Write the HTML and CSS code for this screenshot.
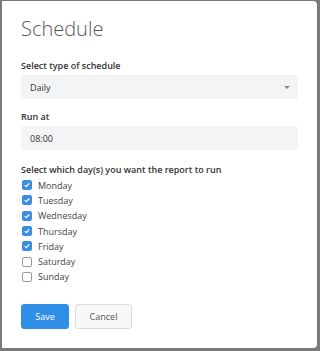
FILE: index.html
```html
<!DOCTYPE html>
<html>
<head>
<meta charset="utf-8">
<link rel="stylesheet" href="styles.css">
</head>
<body>
<div class="dialog">
  <h1 class="title">Schedule</h1>
  <div class="field">
    <label class="label">Select type of schedule</label>
    <div class="select"><span>Daily</span><span class="caret"></span></div>
  </div>
  <div class="field">
    <label class="label">Run at</label>
    <div class="input">08:00</div>
  </div>
  <div class="field days">
    <label class="label">Select which day(s) you want the report to run</label>
    <ul class="checks">
      <li><span class="box on"><svg viewBox="0 0 10 10"><path d="M2.2 5.2 L4.2 7.1 L7.9 3" /></svg></span>Monday</li>
      <li><span class="box on"><svg viewBox="0 0 10 10"><path d="M2.2 5.2 L4.2 7.1 L7.9 3" /></svg></span>Tuesday</li>
      <li><span class="box on"><svg viewBox="0 0 10 10"><path d="M2.2 5.2 L4.2 7.1 L7.9 3" /></svg></span>Wednesday</li>
      <li><span class="box on"><svg viewBox="0 0 10 10"><path d="M2.2 5.2 L4.2 7.1 L7.9 3" /></svg></span>Thursday</li>
      <li><span class="box on"><svg viewBox="0 0 10 10"><path d="M2.2 5.2 L4.2 7.1 L7.9 3" /></svg></span>Friday</li>
      <li><span class="box"></span>Saturday</li>
      <li><span class="box"></span>Sunday</li>
    </ul>
  </div>
  <div class="actions">
    <button class="btn primary">Save</button>
    <button class="btn cancel">Cancel</button>
  </div>
</div>
</body>
</html>
```
FILE: styles.css
```css
html, body {
  margin: 0;
  padding: 0;
  background: #7a7a7a;
  width: 320px;
  height: 351px;
  overflow: hidden;
}
body {
  padding: 1px 3px 3px 2px;
  box-sizing: border-box;
  font-family: "Open Sans", "Liberation Sans", sans-serif;
  color: #333;
}
.dialog {
  background: #fff;
  height: 347px;
  box-sizing: border-box;
  border-radius: 0 4px 4px 0;
  padding: 13.5px 19px 0 19px;
}
.title {
  margin: 0 0 17.5px 0;
  font-size: 20px;
  font-weight: 300;
  color: #585858;
  line-height: 27px;
}
.field {
  margin-bottom: 11px;
}
.field + .field {
  margin-bottom: 13px;
}
.days {
  margin-bottom: 0 !important;
}
.label {
  display: block;
  font-size: 9px;
  font-weight: 600;
  line-height: 13px;
  margin-bottom: 3px;
  color: #333;
}
.select, .input {
  background: #f3f4f5;
  border-radius: 3px;
  height: 24px;
  display: flex;
  align-items: center;
  padding: 0 8px 0 9px;
  font-size: 9px;
  color: #333;
}
.select {
  justify-content: space-between;
}
.caret {
  width: 0;
  height: 0;
  border-left: 3.5px solid transparent;
  border-right: 3.5px solid transparent;
  border-top: 3.5px solid #888;
}
.days .label {
  margin-bottom: 1.5px;
}
.checks {
  list-style: none;
  margin: 0;
  padding: 0;
}
.checks li {
  display: flex;
  align-items: center;
  height: 15.3px;
  font-size: 9px;
  color: #444;
}
.box {
  width: 10px;
  height: 10px;
  box-sizing: border-box;
  border: 1px solid #9a9a9a;
  border-radius: 2px;
  margin: 0 6px 0 1px;
  background: #fff;
  display: flex;
}
.box.on {
  background: #3b8fe0;
  border-color: #3b8fe0;
}
.box svg {
  width: 8px;
  height: 8px;
  fill: none;
  stroke: #fff;
  stroke-width: 1.6;
}
.actions {
  display: flex;
  gap: 6px;
  margin-top: 19.5px;
}
.btn {
  font-family: "Open Sans", "Liberation Sans", sans-serif;
  font-size: 9px;
  height: 25px;
  border-radius: 3px;
  border: 1px solid #dcdcdc;
  background: #f8f8f8;
  color: #555;
  padding: 0;
}
.btn.primary {
  background: #2f8fe6;
  border-color: #2f8fe6;
  color: #fff;
  width: 48px;
}
.btn.cancel {
  width: 57px;
}
```
